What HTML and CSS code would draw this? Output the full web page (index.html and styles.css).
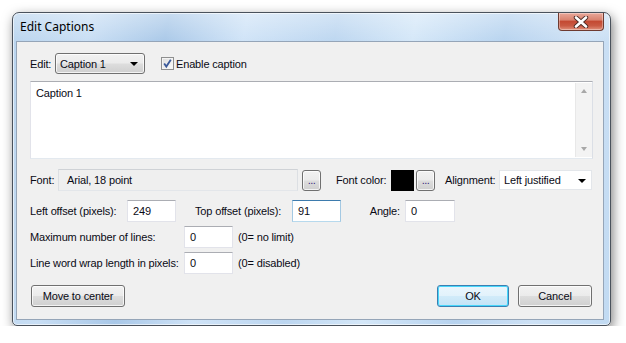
FILE: index.html
```html
<!DOCTYPE html>
<html>
<head>
<meta charset="utf-8">
<link rel="stylesheet" href="styles.css">
</head>
<body>
<div class="window">
  <div class="titlebar">
    <span class="title">Edit Captions</span>
    <div class="close">
      <svg width="18" height="12" viewBox="0 0 18 12"><path d="M4 1.5 L14 10.5 M14 1.5 L4 10.5" stroke="#4a2a24" stroke-width="4.4" stroke-linecap="round"/><path d="M4 1.5 L14 10.5 M14 1.5 L4 10.5" stroke="#ffffff" stroke-width="2.6" stroke-linecap="round"/></svg>
    </div>
  </div>
  <div class="client">
    <div class="row row-edit">
      <span class="lbl w-edit">Edit:</span>
      <div class="combo btn-look w-combo"><span>Caption 1</span><span class="arrow"></span></div>
      <span class="check">
        <svg width="11" height="11" viewBox="0 0 11 11"><path d="M2.2 5.6 L4.3 8.6 L8.8 1.8" fill="none" stroke="#3b5a9a" stroke-width="1.8"/></svg>
      </span>
      <span class="lbl">Enable caption</span>
    </div>
    <div class="memo">
      <div class="memo-text">Caption 1</div>
      <div class="vscroll">
        <span class="sarrow up"></span>
        <span class="sarrow down"></span>
      </div>
    </div>
    <div class="row row-font">
      <span class="lbl w-font">Font:</span>
      <div class="field ro w-fontfield">Arial, 18 point</div>
      <div class="dots btn-look ml4">...</div>
      <span class="lbl w-color ml15">Font color:</span>
      <div class="swatch"></div>
      <div class="dots btn-look ml2">...</div>
      <span class="lbl w-align ml10">Alignment:</span>
      <div class="combo white w-alignsel"><span>Left justified</span><span class="arrow"></span></div>
    </div>
    <div class="row row-off">
      <span class="lbl w-left">Left offset (pixels):</span>
      <div class="field w49">249</div>
      <span class="lbl w-left ml19">Top offset (pixels):</span>
      <div class="field focus w49">91</div>
      <span class="lbl w-angle">Angle:</span>
      <div class="field w50">0</div>
    </div>
    <div class="row row-small">
      <span class="lbl w-long">Maximum number of lines:</span>
      <div class="field w49">0</div>
      <span class="lbl ml5">(0= no limit)</span>
    </div>
    <div class="row row-small">
      <span class="lbl w-long">Line word wrap length in pixels:</span>
      <div class="field w49">0</div>
      <span class="lbl ml5">(0= disabled)</span>
    </div>
    <div class="row row-btns">
      <div class="button btn-look w-move">Move to center</div>
      <div class="spacer"></div>
      <div class="button btn-look default w-ok">OK</div>
      <div class="button btn-look w-cancel">Cancel</div>
    </div>
  </div>
</div>
</body>
</html>
```
FILE: styles.css
```css
* { box-sizing: border-box; }
html, body { margin: 0; padding: 0; background: #ffffff; }
body { font-family: "Liberation Sans", Arial, sans-serif; font-size: 11px; letter-spacing: -0.15px; color: #0a0a14; }

.window {
  margin: 12px 0 0 12px;
  width: 599px;
  height: 314px;
  border: 1px solid #4a525c;
  border-radius: 7px 7px 5px 5px;
  background:
    linear-gradient(to bottom, rgba(255,255,255,0.35), rgba(255,255,255,0) 30px),
    linear-gradient(100deg, #b9d4ee 0%, #c8def4 12%, #a9c8e8 24%, #cfe3f7 36%, #bcd6f0 50%, #d4e7f8 62%, #b7d3ef 76%, #cde1f5 88%, #c1daf2 100%);
  box-shadow: 2px 4px 12px rgba(0,0,0,0.5), inset 0 0 0 1px rgba(255,255,255,0.6);
  padding: 0 6px 5px 3px;
  display: flex;
  flex-direction: column;
}

.titlebar {
  height: 28px;
  display: flex;
  justify-content: space-between;
  align-items: center;
}
.title {
  font-family: "Noto Sans", "Open Sans", sans-serif;
  font-size: 12px;
  letter-spacing: 0;
  padding-left: 4px;
  padding-bottom: 2px;
  color: #000;
}
.close {
  align-self: flex-start;
  width: 46px;
  height: 18px;
  border: 1px solid #6e3a30;
  border-top: none;
  border-radius: 0 0 4px 4px;
  background: linear-gradient(to bottom, #e9a89a 0%, #d98370 40%, #c44a33 50%, #c95a43 75%, #e1917c 100%);
  box-shadow: inset 0 0 0 1px rgba(255,255,255,0.35);
  display: flex;
  align-items: center;
  justify-content: center;
}

.client {
  flex: 1;
  background: #f0f0f0;
  border: 1px solid #95a5b8;
  padding: 11px 10px 0 13px;
  display: flex;
  flex-direction: column;
}

.row { display: flex; align-items: center; }
.row-edit { height: 21px; }
.row-font { height: 22px; margin-top: 10px; }
.row-off { height: 22px; margin-top: 9px; }
.row-small { height: 22px; margin-top: 4px; }
.row-btns { height: 22px; margin-top: 11px; }
.spacer { flex: 1; }

.lbl { white-space: nowrap; }
.w-edit { width: 25px; }
.w-font { width: 28px; }
.w-color { width: 55px; }
.w-align { width: 54px; }
.w-left { width: 97px; }
.w-angle { width: 64px; text-align: right; padding-right: 5px; }
.w-long { width: 154px; }
.ml2 { margin-left: 2px; }
.ml4 { margin-left: 4px; }
.ml5 { margin-left: 5px; }
.ml10 { margin-left: 10px; }
.ml15 { margin-left: 15px; }
.ml19 { margin-left: 19px; }

.btn-look {
  border: 1px solid #707070;
  border-radius: 3px;
  background: linear-gradient(to bottom, #f2f2f2 0%, #ebebeb 48%, #dddddd 52%, #cfcfcf 100%);
  box-shadow: inset 0 0 0 1px rgba(255,255,255,0.75);
}

.combo {
  height: 21px;
  display: flex;
  align-items: center;
  justify-content: space-between;
  padding: 0 6px 0 4px;
}
.w-combo { width: 90px; }
.combo.white {
  background: #ffffff;
  border: 1px solid #e3e6ea;
  height: 20px;
  padding: 0 5px 0 4px;
}
.w-alignsel { width: 93px; }
.arrow {
  width: 0; height: 0;
  border-left: 4px solid transparent;
  border-right: 4px solid transparent;
  border-top: 4px solid #000;
  margin-top: 1px;
}

.check {
  margin-left: 16px;
  margin-right: 2px;
  width: 13px;
  height: 13px;
  border: 1px solid #8e8f8f;
  background: linear-gradient(135deg, #dcdcdc, #fdfdfd);
  box-shadow: inset 0 0 0 1px #f4f4f4;
  display: flex;
  align-items: center;
  justify-content: center;
}

.memo {
  margin-top: 7px;
  height: 78px;
  width: 563px;
  background: #fff;
  border: 1px solid #abadb3;
  border-color: #abadb3 #dbdfe6 #e3e9ef #e2e3ea;
  display: flex;
}
.memo-text { flex: 1; padding: 5px 0 0 5px; }
.vscroll {
  width: 17px;
  margin: 1px 0 1px 0;
  background: #f3f3f3;
  border-left: 1px solid #e8e8e8;
  display: flex;
  flex-direction: column;
  justify-content: space-between;
  align-items: center;
  padding: 6px 0 6px 0;
}
.sarrow {
  width: 0; height: 0;
  border-left: 3.5px solid transparent;
  border-right: 3.5px solid transparent;
}
.sarrow.up { border-bottom: 4px solid #a8a8a8; }
.sarrow.down { border-top: 4px solid #a8a8a8; }

.field {
  height: 22px;
  background: #fff;
  border: 1px solid #e2e3ea;
  border-top-color: #abadb3;
  display: flex;
  align-items: center;
  padding-left: 5px;
}
.field.ro {
  background: #efefef;
  border-color: #cfd2d6 #dcdfe3 #e3e6ea #dcdfe3;
  padding-left: 8px;
}
.field.focus {
  border-color: #3d7bad #a4c9e3 #b7d9ed #a4c9e3;
}
.w-fontfield { width: 240px; }
.w49 { width: 49px; }
.w50 { width: 50px; }

.dots {
  width: 19px;
  height: 21px;
  display: flex;
  align-items: flex-end;
  justify-content: center;
  padding-bottom: 4px;
  font-size: 11px;
  color: #3a2a80;
  letter-spacing: -0.5px;
}
.swatch { width: 23px; height: 21px; background: #000; }

.button {
  height: 22px;
  display: flex;
  align-items: center;
  justify-content: center;
}
.w-move { width: 94px; margin-left: 1px; }
.w-ok { width: 72px; }
.w-cancel { width: 74px; margin-left: 9px; margin-right: 1px; }
.button.default {
  border-color: #3c7fb1;
  box-shadow: inset 0 0 0 1px #48d7fb;
  background: linear-gradient(to bottom, #eaf6fd 0%, #e2f2fb 48%, #d1ebf9 52%, #c4e3f6 100%);
}
```
